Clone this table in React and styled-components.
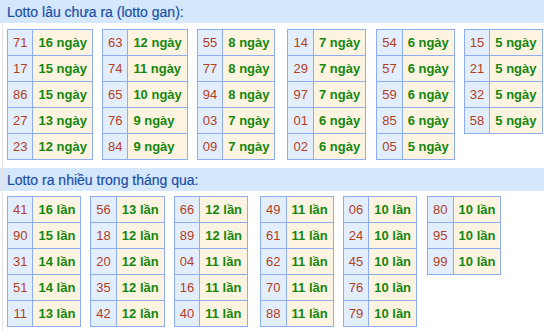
import React from "react";
import styled, { createGlobalStyle } from "styled-components";

const gan = [
  [["71", "16"], ["17", "15"], ["86", "15"], ["27", "13"], ["23", "12"]],
  [["63", "12"], ["74", "11"], ["65", "10"], ["76", "9"], ["84", "9"]],
  [["55", "8"], ["77", "8"], ["94", "8"], ["03", "7"], ["09", "7"]],
  [["14", "7"], ["29", "7"], ["97", "7"], ["01", "6"], ["02", "6"]],
  [["54", "6"], ["57", "6"], ["59", "6"], ["85", "6"], ["05", "5"]],
  [["15", "5"], ["21", "5"], ["32", "5"], ["58", "5"]],
];

const nhieu = [
  [["41", "16"], ["90", "15"], ["31", "14"], ["51", "14"], ["11", "13"]],
  [["56", "13"], ["18", "12"], ["20", "12"], ["35", "12"], ["42", "12"]],
  [["66", "12"], ["89", "12"], ["04", "11"], ["16", "11"], ["40", "11"]],
  [["49", "11"], ["61", "11"], ["62", "11"], ["70", "11"], ["88", "11"]],
  [["06", "10"], ["24", "10"], ["45", "10"], ["76", "10"], ["79", "10"]],
  [["80", "10"], ["95", "10"], ["99", "10"]],
];

// space after each table, as measured on the page
const ganGaps = [9, 9, 12, 10, 9, 0];
const nhieuGaps = [9, 9, 12, 9, 10, 0];

const LottoBlock = ({ title, groups, gaps, unit, first }) => (
  <>
    <Heading $first={first}>{title}</Heading>
    <Tables $first={first}>
      {groups.map((rows, i) => (
        <Table key={i} $space={gaps[i]}>
          <tbody>
            {rows.map(([num, count]) => (
              <tr key={num}>
                <Num>{num}</Num>
                <Count>
                  {count} {unit}
                </Count>
              </tr>
            ))}
          </tbody>
        </Table>
      ))}
    </Tables>
  </>
);

const App = () => {
  return (
    <>
      <GlobalStyle />
      <Page>
        <LottoBlock
          first
          title="Lotto lâu chưa ra (lotto gan):"
          groups={gan}
          gaps={ganGaps}
          unit="ngày"
        />
        <LottoBlock
          title="Lotto ra nhiều trong tháng qua:"
          groups={nhieu}
          gaps={nhieuGaps}
          unit="lần"
        />
      </Page>
    </>
  );
};

export default App;

const GlobalStyle = createGlobalStyle`
  body {
    margin: 0;
    background: #fff;
    font-family: "Liberation Sans", Arial, sans-serif;
  }
`;

const Page = styled.div`
  width: 544px;
  height: 330px;
  overflow: hidden;
  position: relative;

  &::before {
    content: "";
    position: absolute;
    left: 2px;
    top: 23px;
    bottom: 0;
    width: 1px;
    background: #e4e4e4;
  }
`;

const Heading = styled.div`
  height: 23px;
  line-height: 24px;
  margin-top: ${(p) => (p.$first ? "0" : "8px")};
  padding-left: 7px;
  background: #d5e7fb;
  color: #1c4fa6;
  font-size: 14px;
  -webkit-text-stroke: 0.2px #1c4fa6;
`;

const Tables = styled.div`
  display: flex;
  align-items: flex-start;
  padding-left: 7px;
  margin-top: ${(p) => (p.$first ? "6px" : "5px")};
`;

const Table = styled.table`
  border-collapse: collapse;
  font-size: 13px;
  margin-right: ${(p) => p.$space}px;

  td {
    height: 25px;
    padding: 0 5px;
    border: 1px solid #8dadf0;
    white-space: nowrap;
  }
`;

const Num = styled.td`
  background: #e3eefc;
  color: #b2401f;
  text-align: center;
`;

const Count = styled.td`
  background: #fdf3e1;
  color: #15870f;
  font-weight: bold;
`;
